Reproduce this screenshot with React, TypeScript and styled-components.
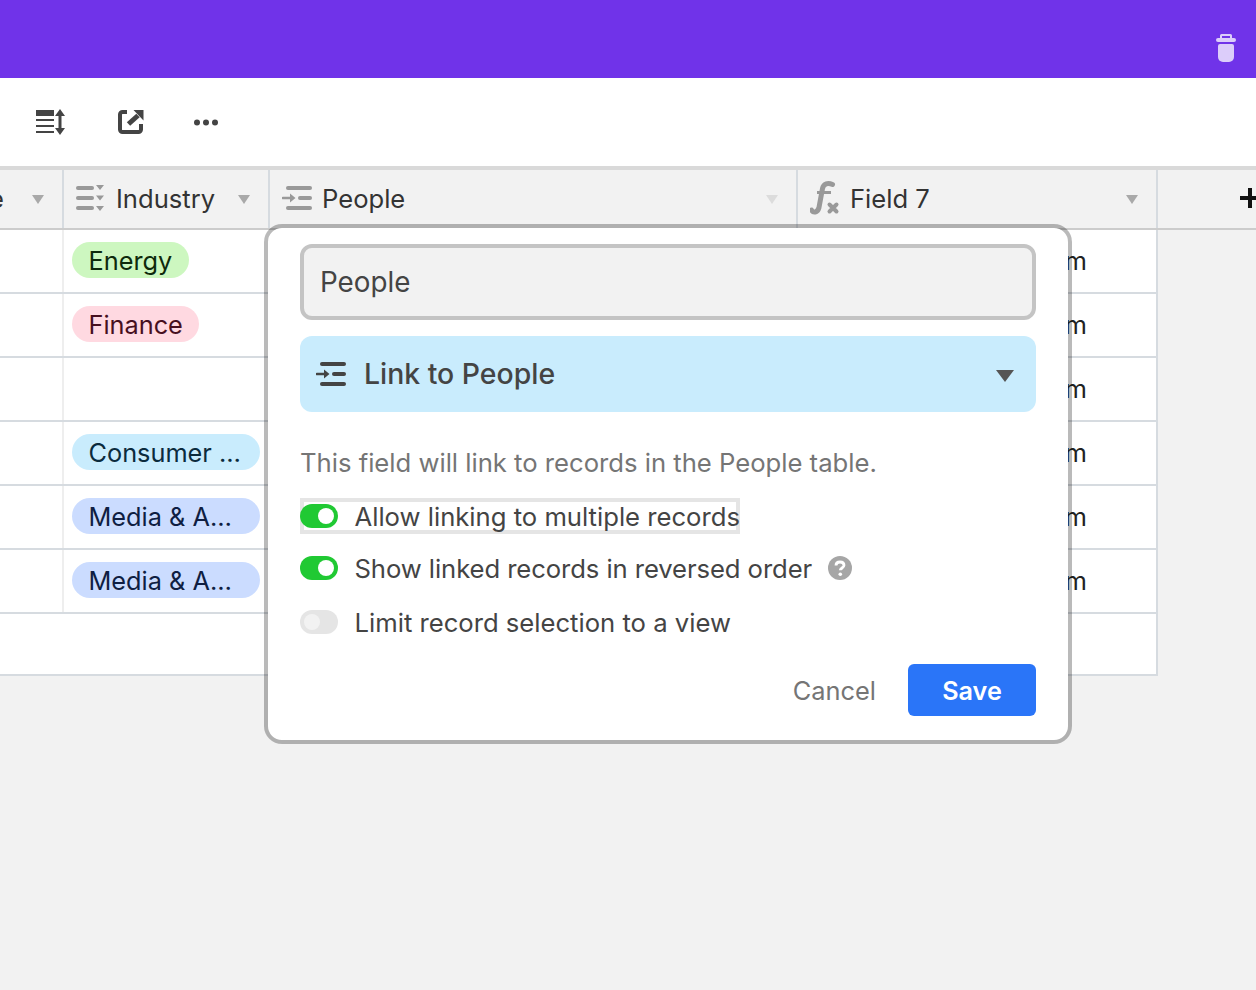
import React from "react";
import styled, { createGlobalStyle } from "styled-components";

const GlobalStyle = createGlobalStyle`
  html, body {
    margin: 0;
    background: #f2f2f2;
    font-family: Inter, "Liberation Sans", sans-serif;
    color: #333;
  }
  * { box-sizing: border-box; }
`;

const Page = styled.div`
  position: relative;
  width: 1256px;
  height: 990px;
  overflow: hidden;
`;

const AppBar = styled.header`
  height: 78px;
  background: #7033e9;
  display: flex;
  justify-content: flex-end;
  align-items: flex-start;
  padding: 34px 20px 0 0;
`;

const Toolbar = styled.div`
  height: 88px;
  background: #fff;
  display: flex;
  align-items: center;
  gap: 52px;
  padding-left: 36px;
`;

const HeaderRow = styled.div`
  height: 64px;
  display: grid;
  grid-template-columns: 64px 206px 528px 360px 1fr;
  border-top: 4px solid #d9d9d9;
  border-bottom: 2px solid #ccc;
  background: #f2f2f2;
`;

const HeaderCell = styled.div<{ $end?: boolean }>`
  display: flex;
  align-items: center;
  justify-content: ${({ $end }) => ($end ? "flex-end" : "flex-start")};
  border-right: 2px solid #d6dbe0;
  padding: 0 ${({ $end }) => ($end ? "18px" : "0")} 2px 12px;
  overflow: hidden;
  font-size: 25.6px;
  color: #333;
  white-space: nowrap;
`;

const HeaderLabel = styled.span`
  margin-left: 10px;
  flex: 1;
`;

const ClippedLabel = styled.span`
  margin-right: 28px;
`;

const Caret = styled.span<{ $faint?: boolean }>`
  width: 0;
  height: 0;
  flex: none;
  border-left: 6px solid transparent;
  border-right: 6px solid transparent;
  border-top: 9px solid ${({ $faint }) => ($faint ? "#dcdcdc" : "#a9a9a9")};
  margin-right: 18px;
  margin-top: 3px;
`;

const FirstCaret = styled(Caret)`
  margin-right: 0;
`;

const AddCell = styled.div`
  display: flex;
  justify-content: flex-end;
  align-items: center;
  padding-bottom: 2px;
  overflow: hidden;
`;

const Body = styled.div`
  width: 1158px;
  background: #fff;
  border-right: 2px solid #d6dbe0;
  border-bottom: 2px solid #d6dbe0;
`;

const Row = styled.div<{ $last?: boolean }>`
  height: ${({ $last }) => ($last ? "60px" : "64px")};
  display: grid;
  grid-template-columns: 64px 206px 528px 1fr;
  border-bottom: ${({ $last }) => ($last ? "0" : "2px solid #d6dbe0")};
`;

const Cell = styled.div<{ $line?: boolean }>`
  border-right: ${({ $line }) => ($line ? "2px solid #eee" : "0")};
  padding: 12px 0 0 8px;
  min-width: 0;
`;

const FieldCell = styled.div`
  text-align: right;
  padding-right: 69px;
  font-size: 25.6px;
  line-height: 62px;
  color: #222;
`;

const tones = {
  green: { bg: "#cdf7c0", fg: "#0e2a0c" },
  pink: { bg: "#ffd9e1", fg: "#47101f" },
  cyan: { bg: "#c9ecfd", fg: "#0b2b3d" },
  blue: { bg: "#cbdcff", fg: "#0f1e42" },
};

const Chip = styled.span<{ $tone: keyof typeof tones; $full?: boolean }>`
  display: inline-block;
  width: ${({ $full }) => ($full ? "188px" : "auto")};
  height: 36px;
  line-height: 38px;
  padding: 0 16.5px;
  border-radius: 18px;
  font-size: 25.3px;
  white-space: nowrap;
  vertical-align: top;
  background: ${({ $tone }) => tones[$tone].bg};
  color: ${({ $tone }) => tones[$tone].fg};
`;

const Modal = styled.div`
  position: absolute;
  left: 264px;
  top: 224px;
  width: 808px;
  height: 520px;
  padding: 16px 32px 0;
  background: #fff;
  background-clip: padding-box;
  border: 4px solid rgba(0, 0, 0, 0.27);
  border-radius: 18px;
`;

const NameInput = styled.div`
  height: 76px;
  display: flex;
  align-items: center;
  padding-left: 16px;
  background: #f2f2f2;
  border: 4px solid #c4c4c4;
  border-radius: 12px;
  font-size: 27.8px;
  color: #444;
`;

const TypeSelect = styled.div`
  height: 76px;
  margin-top: 16px;
  display: flex;
  align-items: center;
  padding: 0 22px 2px 16px;
  background: #c9ecfd;
  border-radius: 12px;
  font-size: 28.4px;
  font-weight: 500;
  color: #444;

  & svg {
    margin-top: 2px;
  }
`;

const TypeLabel = styled.span`
  flex: 1;
  margin-left: 18px;
`;

const TypeCaret = styled.span`
  width: 0;
  height: 0;
  margin-top: 5px;
  border-left: 9px solid transparent;
  border-right: 9px solid transparent;
  border-top: 12px solid #555;
`;

const Description = styled.p`
  margin: 34px 0 0;
  height: 34px;
  line-height: 34px;
  font-size: 25.65px;
  color: #757575;
`;

const Options = styled.div`
  margin-top: 18px;
  display: flex;
  flex-direction: column;
  align-items: flex-start;
`;

const Option = styled.div<{ $focused?: boolean; $gap: number }>`
  display: flex;
  align-items: center;
  height: 36px;
  margin-top: ${({ $gap }) => $gap}px;
  box-shadow: ${({ $focused }) => ($focused ? "inset 0 0 0 4px #e5e5e5" : "none")};
  font-size: 25.65px;
  color: #444;
  white-space: nowrap;
`;

const TightLabel = styled.span`
  letter-spacing: -0.08px;
`;

const Track = styled.span<{ $on?: boolean }>`
  position: relative;
  flex: none;
  width: 38px;
  height: 24px;
  border-radius: 12px;
  background: ${({ $on }) => ($on ? "#20c933" : "#e5e5e5")};
  margin-right: 16.5px;

  &::after {
    content: "";
    position: absolute;
    top: 4px;
    left: ${({ $on }) => ($on ? "18px" : "4px")};
    width: 16px;
    height: 16px;
    border-radius: 50%;
    background: ${({ $on }) => ($on ? "#fff" : "#f2f2f2")};
  }
`;

const HelpIcon = styled.svg`
  margin-left: 16px;
  flex: none;
`;

const Footer = styled.div`
  position: absolute;
  right: 32px;
  bottom: 24px;
  display: flex;
  align-items: center;
  gap: 32px;
`;

const CancelButton = styled.span`
  font-size: 25.4px;
  color: #757575;
`;

const SaveButton = styled.span`
  width: 128px;
  height: 52px;
  display: flex;
  align-items: center;
  justify-content: center;
  padding-top: 2px;
  border-radius: 6px;
  background: #2a75f8;
  color: #fff;
  font-size: 25.2px;
  font-weight: 600;
`;

const TrashIcon = () => (
  <svg width="20" height="28" viewBox="0 0 20 28" fill="#dccdfa">
    <path d="M4 5V1.500A1.500 1.500 0 0 1 5.500 0h9A1.500 1.500 0 0 1 16 1.500V5h-2V2H6v3z" />
    <rect x="0" y="4" width="20" height="4" rx="2" />
    <path d="M2 12a2 2 0 0 1 2-2h12a2 2 0 0 1 2 2v11a5 5 0 0 1-5 5H7a5 5 0 0 1-5-5z" />
  </svg>
);

const RowHeightIcon = () => (
  <svg width="30" height="26" viewBox="0 0 30 26" fill="#444">
    <rect x="0" y="1" width="18" height="6" />
    <rect x="0" y="10" width="18" height="2" />
    <rect x="0" y="16" width="18" height="2" />
    <rect x="0" y="22" width="18" height="2" />
    <path d="M24 0l5 7h-3.500v12H29l-5 7-5-7h3.500V7H19z" />
  </svg>
);

const ShareIcon = () => (
  <svg width="24" height="24" viewBox="0 0 24 24" fill="none" overflow="visible">
    <path
      d="M9 2H4.500A2.500 2.500 0 0 0 2 4.500v15A2.500 2.500 0 0 0 4.500 22h16a2.500 2.500 0 0 0 2.500-2.500V14"
      stroke="#444"
      strokeWidth="4"
    />
    <path d="M15.500 0H25.500V10.500z" fill="#444" />
    <path d="M10.500 14L20 5.500" stroke="#444" strokeWidth="5" />
  </svg>
);

const DotsIcon = () => (
  <svg width="24" height="8" viewBox="0 0 24 8" fill="#444">
    <circle cx="3" cy="4.500" r="3" />
    <circle cx="12" cy="4.500" r="3" />
    <circle cx="21" cy="4.500" r="3" />
  </svg>
);

const SelectIcon = () => (
  <svg width="30" height="26" viewBox="0 0 30 26" fill="#999" style={{ flex: "none" }}>
    <rect x="0" y="1" width="18" height="4" rx="2" />
    <rect x="0" y="11" width="18" height="4" rx="2" />
    <rect x="0" y="21" width="18" height="4" rx="2" />
    <path d="M20 0h8l-4 5zM20 10.500h8l-4 5zM20 21h8l-4 5z" />
  </svg>
);

const LinkIcon = ({ color }: { color: string }) => (
  <svg width="30" height="24" viewBox="0 0 30 24" fill={color} style={{ flex: "none" }}>
    <rect x="4" y="0" width="26" height="4" rx="2" />
    <rect x="16" y="10" width="14" height="4" rx="2" />
    <rect x="4" y="20" width="26" height="4" rx="2" />
    <path d="M1 10.700h7V7.500l5.500 4.500L8 16.500v-3.200H1a1.300 1.300 0 0 1 0-2.600z" />
  </svg>
);

const FormulaIcon = () => (
  <svg width="30" height="36" viewBox="0 0 30 36" fill="none" style={{ flex: "none" }}>
    <path
      d="M1.500 30C3 33 7.500 33 9 27.500L12.500 8.500C13.500 3.500 18 2.500 22.500 4.500"
      stroke="#999"
      strokeWidth="5"
      strokeLinecap="round"
    />
    <path d="M7 12.500H21" stroke="#999" strokeWidth="3" />
    <path
      d="M19.500 24.500l7 7M26.500 24.500l-7 7"
      stroke="#999"
      strokeWidth="4"
      strokeLinecap="round"
    />
  </svg>
);

const PlusIcon = () => (
  <svg width="20" height="20" viewBox="0 0 20 20" fill="#111" style={{ flex: "none", marginRight: -4 }}>
    <rect x="8" y="0" width="4" height="20" />
    <rect x="0" y="8" width="20" height="4" />
  </svg>
);

const rows: { label?: string; tone?: keyof typeof tones; full?: boolean }[] = [
  { label: "Energy", tone: "green" },
  { label: "Finance", tone: "pink" },
  {},
  { label: "Consumer …", tone: "cyan", full: true },
  { label: "Media & A…", tone: "blue", full: true },
  { label: "Media & A…", tone: "blue", full: true },
];

export default function App() {
  return (
    <Page>
      <GlobalStyle />
      <AppBar>
        <TrashIcon />
      </AppBar>
      <Toolbar>
        <RowHeightIcon />
        <ShareIcon />
        <DotsIcon />
      </Toolbar>
      <HeaderRow>
        <HeaderCell $end>
          <ClippedLabel>Name</ClippedLabel>
          <FirstCaret />
        </HeaderCell>
        <HeaderCell>
          <SelectIcon />
          <HeaderLabel>Industry</HeaderLabel>
          <Caret />
        </HeaderCell>
        <HeaderCell>
          <LinkIcon color="#999" />
          <HeaderLabel>People</HeaderLabel>
          <Caret $faint />
        </HeaderCell>
        <HeaderCell>
          <FormulaIcon />
          <HeaderLabel>Field 7</HeaderLabel>
          <Caret />
        </HeaderCell>
        <AddCell>
          <PlusIcon />
        </AddCell>
      </HeaderRow>
      <Body>
        {rows.map((row, i) => (
          <Row key={i}>
            <Cell $line />
            <Cell>
              {row.tone && (
                <Chip $tone={row.tone} $full={row.full}>
                  {row.label}
                </Chip>
              )}
            </Cell>
            <Cell />
            <FieldCell>m</FieldCell>
          </Row>
        ))}
        <Row $last />
      </Body>
      <Modal>
        <NameInput>People</NameInput>
        <TypeSelect>
          <LinkIcon color="#444" />
          <TypeLabel>Link to People</TypeLabel>
          <TypeCaret />
        </TypeSelect>
        <Description>This field will link to records in the People table.</Description>
        <Options>
          <Option $focused $gap={0}>
            <Track $on />
            Allow linking to multiple records
          </Option>
          <Option $gap={16}>
            <Track $on />
            <TightLabel>Show linked records in reversed order</TightLabel>
            <HelpIcon width="24" height="24" viewBox="0 0 24 24">
              <circle cx="12" cy="12" r="12" fill="#a6a6a6" />
              <path
                d="M8 9.500C8 7 10 6 12 6c2.500 0 4 1.500 4 3.300 0 2.700-3.700 2.700-3.700 5"
                stroke="#fff"
                strokeWidth="2.800"
                fill="none"
              />
              <circle cx="12.300" cy="18.300" r="1.800" fill="#fff" />
            </HelpIcon>
          </Option>
          <Option $gap={18}>
            <Track />
            Limit record selection to a view
          </Option>
        </Options>
        <Footer>
          <CancelButton>Cancel</CancelButton>
          <SaveButton>Save</SaveButton>
        </Footer>
      </Modal>
    </Page>
  );
}
